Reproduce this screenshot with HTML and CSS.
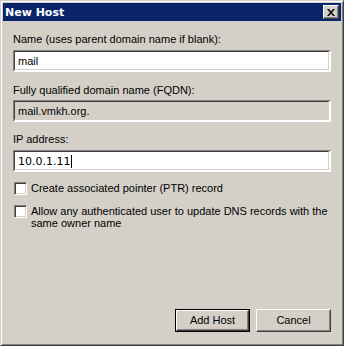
FILE: index.html
```html
<!DOCTYPE html>
<html>
<head>
<meta charset="utf-8">
<title>New Host</title>
<link rel="stylesheet" href="styles.css">
</head>
<body>
<div class="window">
  <div class="titlebar">
    <span class="title">New Host</span>
    <span class="close-btn">
      <svg width="8" height="7" viewBox="0 0 8 7"><path d="M0 0h2l2 2.5L6 0h2L5 3.5 8 7H6L4 4.5 2 7H0l3-3.5z" fill="#000"/></svg>
    </span>
  </div>
  <div class="content">
    <div class="label">Name (uses parent domain name if blank):</div>
    <div class="field field-input">mail</div>
    <div class="label label-fqdn">Fully qualified domain name (FQDN):</div>
    <div class="field field-readonly">mail.vmkh.org.</div>
    <div class="label label-ip">IP address:</div>
    <div class="field field-input field-ip"><span class="ip">10.0.1.11</span><span class="caret"></span></div>
    <div class="check-row check-first">
      <span class="checkbox"></span>
      <span class="check-text">Create associated pointer (PTR) record</span>
    </div>
    <div class="check-row">
      <span class="checkbox"></span>
      <span class="check-text">Allow any authenticated user to update DNS records with the same owner name</span>
    </div>
    <div class="spacer"></div>
    <div class="buttons">
      <span class="btn btn-default"><span class="btn-inner">Add Host</span></span>
      <span class="btn"><span class="btn-inner">Cancel</span></span>
    </div>
  </div>
</div>
</body>
</html>
```

FILE: styles.css
```css
html, body {
  margin: 0;
  padding: 0;
  background: #d4d0c8;
}
body {
  font-family: "Liberation Sans", Arial, sans-serif;
  font-size: 11px;
  color: #000;
}
.window {
  width: 344px;
  height: 346px;
  box-sizing: border-box;
  background: #d4d0c8;
  border-style: solid;
  border-width: 1px;
  border-color: #d4d0c8 #404040 #404040 #d4d0c8;
  display: flex;
  flex-direction: column;
  box-shadow: inset 1px 1px 0 #fff, inset -1px -1px 0 #808080;
  padding: 2px 2px 3px 2px;
}
.titlebar {
  height: 18px;
  background: #0a246a;
  display: flex;
  align-items: center;
  justify-content: space-between;
  padding: 0 2px 0 2px;
  flex: none;
}
.title {
  color: #fff;
  font-weight: bold;
  font-size: 12px;
  font-family: "DejaVu Sans", sans-serif;
  font-size: 11px;
}
.close-btn {
  width: 16px;
  height: 14px;
  box-sizing: border-box;
  background: #d4d0c8;
  border: 1px solid;
  border-color: #fff #404040 #404040 #fff;
  box-shadow: inset -1px -1px 0 #808080;
  display: flex;
  align-items: center;
  justify-content: center;
}
.close-btn svg { display: block; margin-left: -1px; }
.content {
  flex: 1;
  display: flex;
  flex-direction: column;
  padding: 12px 10px 10px 10px;
}
.label {
  height: 13px;
  line-height: 13px;
  margin-bottom: 4px;
  white-space: nowrap;
}
.label-fqdn { margin-top: 12px; margin-bottom: 3px; }
.label-ip { margin-top: 11px; }
.field {
  height: 22px;
  box-sizing: border-box;
  border: 2px solid;
  border-color: #808080 #fff #fff #808080;
  position: relative;
  display: flex;
  align-items: center;
  padding-left: 3px;
}
.field::before {
  content: "";
  position: absolute;
  inset: -1px 0 0 -1px;
  border-top: 1px solid #404040;
  border-left: 1px solid #404040;
  border-right: 1px solid #d4d0c8;
  border-bottom: 1px solid #d4d0c8;
  pointer-events: none;
}
.field-input { background: #fff; }
.field-readonly { background: #d4d0c8; }
.ip {
  font-family: "DejaVu Sans", sans-serif;
  font-size: 11px;
}
.caret {
  width: 1px;
  height: 13px;
  background: #000;
  margin-left: 1px;
}
.check-row {
  display: flex;
  align-items: flex-start;
  margin-top: 10px;
  padding-left: 1px;
}
.check-first { margin-top: 10px; }
.checkbox {
  flex: none;
  width: 13px;
  height: 13px;
  box-sizing: border-box;
  background: #fff;
  border: 1px solid;
  border-color: #808080 #fff #fff #808080;
  box-shadow: inset 1px 1px 0 #404040, inset -1px -1px 0 #d4d0c8;
}
.check-text {
  margin-left: 4px;
  line-height: 12px;
  margin-top: 0;
}
.spacer { flex: 1; }
.buttons {
  display: flex;
  justify-content: flex-end;
  gap: 6px;
}
.btn {
  width: 75px;
  height: 23px;
  box-sizing: border-box;
  border: 1px solid;
  border-color: #fff #404040 #404040 #fff;
  box-shadow: inset -1px -1px 0 #808080;
  display: flex;
  align-items: center;
  justify-content: center;
  background: #d4d0c8;
}
.btn-default {
  border: 1px solid #000;
  box-shadow: none;
}
.btn-default .btn-inner {
  width: 100%;
  height: 100%;
  box-sizing: border-box;
  border: 1px solid;
  border-color: #fff #404040 #404040 #fff;
  box-shadow: inset -1px -1px 0 #808080;
  display: flex;
  align-items: center;
  justify-content: center;
}
.btn-inner { line-height: 13px; }
```
